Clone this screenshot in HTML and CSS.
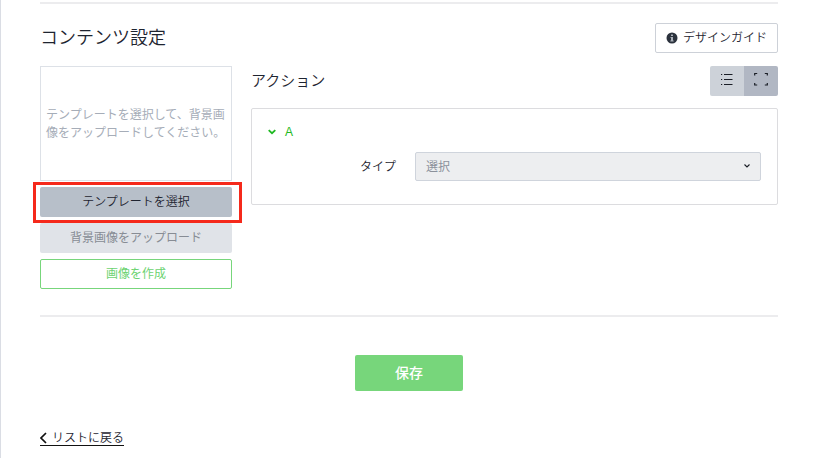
FILE: index.html
```html
<!DOCTYPE html>
<html lang="ja">
  <head>
    <meta charset="UTF-8" />
    <meta name="viewport" content="width=device-width, initial-scale=1.0" />
    <title>コンテンツ設定</title>
    <link rel="stylesheet" href="styles.css">
  </head>

  <body>
    <main class="page">
      <section class="content">
        <header class="content-header">
          <h1>コンテンツ設定</h1>
          <button type="button" class="btn guide">
            <svg width="12" height="12" viewBox="0 0 12 12" aria-hidden="true">
              <circle cx="6" cy="6" r="5.5" fill="#2b323d" />
              <path d="M5 2.5h2v1.5H5zM4.5 5H7v3.5h.7v1H4.3v-1H5V6h-.5z" fill="#a9afb8" />
            </svg>
            デザインガイド
          </button>
        </header>

        <div class="columns">
          <div class="side">
            <p class="preview">テンプレートを選択して、背景画像をアップロードしてください。</p>
            <div class="side-buttons">
              <div class="marked">
                <button type="button" class="btn template">テンプレートを選択</button>
              </div>
              <button type="button" class="btn upload" disabled>背景画像をアップロード</button>
              <button type="button" class="btn create">画像を作成</button>
            </div>
          </div>

          <div class="actions">
            <div class="actions-header">
              <h2>アクション</h2>
              <div class="toggle">
                <button type="button" aria-label="リスト表示">
                  <svg width="14" height="14" viewBox="0 0 14 14" aria-hidden="true">
                    <path d="M1 2.5h1.2M1 7.5h1.2M1 12.5h1.2M4 2.5h8.500M4 7.5h8.500M4 12.5h8.500" stroke="#1a1e26" stroke-width="1.2" />
                  </svg>
                </button>
                <button type="button" class="active" aria-label="領域表示">
                  <svg width="14" height="14" viewBox="0 0 14 14" aria-hidden="true">
                    <path d="M.7 3.500V1.500h2.500M10.800 1.500h2.500v2M13.300 11v2h-2.500M3.200 13H.7v-2" fill="none" stroke="#1a1e26" stroke-width="1.2" />
                  </svg>
                </button>
              </div>
            </div>

            <div class="card">
              <button type="button" class="area-name">
                <svg width="8" height="6" viewBox="0 0 8 6" aria-hidden="true">
                  <path d="M.7 1.2l3.300 3 3.300-3" fill="none" stroke="#1fb922" stroke-width="1.8" />
                </svg>
                A
              </button>
              <div class="field">
                <label for="type">タイプ</label>
                <div class="select-box">
                  <select id="type">
                    <option>選択</option>
                  </select>
                  <svg class="arrow" width="6" height="4" viewBox="0 0 6 4" aria-hidden="true">
                    <path d="M.5 .5L3 3 5.500 .5" fill="none" stroke="#1a1e26" stroke-width="1.1" />
                  </svg>
                </div>
              </div>
            </div>
          </div>
        </div>
      </section>

      <div class="save-area">
        <button type="button" class="save">保存</button>
      </div>

      <a href="#" class="back">
        <svg width="8" height="12" viewBox="0 0 8 12" aria-hidden="true">
          <path d="M6 1L1 6l5 5" fill="none" stroke="#111" stroke-width="1.7" />
        </svg>
        リストに戻る
      </a>
    </main>
  </body>
</html>
```
FILE: styles.css
```css
* {
  box-sizing: border-box;
}

body {
  margin: 0;
  background-color: #fff;
  color: #1e2430;
  font-family: "Liberation Sans", "Noto Sans CJK JP", sans-serif;
  font-size: 12px;
  font-weight: 350;
  line-height: 18px;
}

h1,
h2,
p {
  margin: 0;
  font-weight: 350;
}

button,
select {
  font: inherit;
  color: inherit;
  cursor: pointer;
}

svg {
  flex: none;
}

.page {
  min-height: 100vh;
  border-left: 1px solid #dadde4;
  padding: 2px 38px 0 39px;
}

.content {
  border-top: 2px solid #ececee;
  border-bottom: 2px solid #ececee;
  padding: 19px 0 26px;
}

.content-header {
  display: flex;
  justify-content: space-between;
  align-items: center;
  margin-bottom: 13px;
}

h1 {
  font-size: 18px;
  line-height: 26px;
}

.btn {
  display: flex;
  justify-content: center;
  align-items: center;
  width: 100%;
  height: 30px;
  border: 1px solid transparent;
  border-radius: 2px;
  padding: 0 10px;
  background-color: #fff;
}

.guide {
  width: auto;
  gap: 5px;
  border: 1px solid #cdd1d8;
}

.columns {
  display: flex;
  gap: 19px;
}

.side {
  width: 192px;
  flex: none;
}

.preview {
  display: flex;
  align-items: center;
  height: 115px;
  border: 1px solid #dde1e7;
  padding: 0 5px;
  color: #a6adb8;
  font-weight: 400;
}

.side-buttons {
  display: flex;
  flex-direction: column;
  gap: 6px;
  margin-top: 6px;
}

.marked {
  position: relative;
}

/* red frame around the button to press */
.marked::after {
  content: "";
  position: absolute;
  inset: -5px -10px -6px -7px;
  border: 3px solid #f5291b;
  pointer-events: none;
}

.template {
  background-color: #b7bfc9;
}

.upload {
  background-color: #e0e3e8;
  color: #878c94;
  font-weight: 400;
}

.create {
  border-color: #77d67b;
  color: #6dd371;
  font-weight: 400;
}

.actions {
  flex: 1;
  min-width: 0;
}

.actions-header {
  display: flex;
  justify-content: space-between;
  align-items: center;
  margin-bottom: 12px;
}

h2 {
  font-size: 15px;
}

.toggle {
  display: flex;
  border-radius: 2px;
  overflow: hidden;
}

.toggle button {
  display: flex;
  justify-content: center;
  align-items: center;
  width: 34px;
  height: 30px;
  border: 0;
  padding: 0 0 4px;
  background-color: #cdd2d9;
}

.toggle .active {
  background-color: #b1b7c3;
}

.card {
  border: 1px solid #dcdcdf;
  border-radius: 2px;
  padding: 14px 16px 23px;
}

.area-name {
  display: flex;
  align-items: center;
  gap: 9px;
  border: 0;
  padding: 0;
  background: none;
  color: #1fb922;
}

.field {
  display: flex;
  align-items: center;
  margin-top: 11px;
}

.field label {
  width: 128px;
  margin-right: 19px;
  text-align: right;
}

.select-box {
  position: relative;
  flex: 1;
}

.select-box select {
  display: block;
  appearance: none;
  width: 100%;
  height: 29px;
  border: 1px solid #cfd4dc;
  border-radius: 2px;
  padding: 0 10px;
  background-color: #edeef0;
  color: #8b919b;
  font-weight: 400;
}

.arrow {
  position: absolute;
  top: 12px;
  right: 11px;
  pointer-events: none;
}

.save-area {
  display: flex;
  justify-content: center;
  padding: 38px 0 40px;
}

.save {
  width: 108px;
  height: 36px;
  border: 0;
  border-radius: 2px;
  background-color: #77d67b;
  color: #fff;
  font-size: 14px;
  font-weight: 500;
}

.back {
  display: inline-flex;
  align-items: center;
  gap: 4px;
  border-bottom: 1px solid #111;
  color: #1e2430;
  line-height: 14px;
  text-decoration: none;
}
```
